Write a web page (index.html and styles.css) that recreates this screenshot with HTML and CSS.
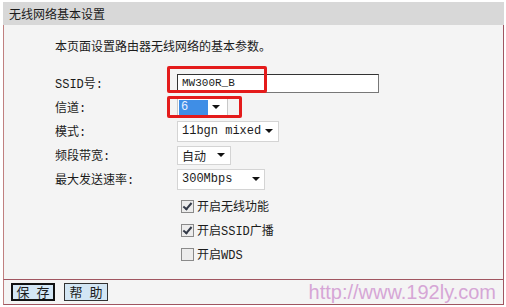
FILE: index.html
```html
<!DOCTYPE html>
<html>
<head>
<meta charset="utf-8">
<link rel="stylesheet" href="styles.css">
</head>
<body>
<div class="panel">
  <div class="head">无线网络基本设置</div>
  <div class="body">
    <p class="desc">本页面设置路由器无线网络的基本参数。</p>
    <div class="form">
      <div class="row"><span class="label">SSID号:</span><span class="input">MW300R_B</span></div>
      <div class="row"><span class="label">信道:</span><span class="select sel-ch"><span class="hl">6</span><span class="arrow"></span></span></div>
      <div class="row"><span class="label">模式:</span><span class="select sel-mode"><span class="val">11bgn mixed</span><span class="arrow"></span></span></div>
      <div class="row"><span class="label">频段带宽:</span><span class="select sel-bw"><span class="val">自动</span><span class="arrow"></span></span></div>
      <div class="row"><span class="label">最大发送速率:</span><span class="select sel-rate"><span class="val">300Mbps</span><span class="arrow"></span></span></div>
      <div class="checks">
        <div class="crow"><span class="cb on"></span><span>开启无线功能</span></div>
        <div class="crow"><span class="cb on"></span><span>开启SSID广播</span></div>
        <div class="crow"><span class="cb"></span><span>开启WDS</span></div>
      </div>
    </div>
    <div class="mark mark-ssid"></div>
    <div class="mark mark-ch"></div>
  </div>
  <div class="foot">
    <span class="btn btn-save">保 存</span>
    <span class="btn">帮 助</span>
    <span class="wm">http://www.192ly.com</span>
  </div>
</div>
</body>
</html>
```
FILE: styles.css
```css
html, body {
  margin: 0;
  padding: 0;
  background: #ffffff;
}
body {
  font-family: "Liberation Mono", "Noto Sans CJK SC", monospace;
  font-size: 12px;
  color: #1b1b1b;
}
.panel {
  margin: 2px 0 0 3px;
  width: 501px;
}
.head {
  height: 23px;
  line-height: 23px;
  background: #d8d8d8;
  padding-left: 6px;
  font-family: "Noto Sans CJK SC", sans-serif;
  font-size: 12px;
}
.body {
  position: relative;
  height: 254px;
  background: #f4f4f4;
  border-left: 1px solid #c08080;
  border-right: 1px solid #a05560;
  border-bottom: 1px solid #a05560;
  padding-left: 51px;
}
.desc {
  margin: 0;
  padding-top: 13px;
  line-height: 16px;
  font-family: "Noto Sans CJK SC", sans-serif;
}
.form {
  margin-top: 17px;
}
.row {
  display: flex;
  align-items: center;
  height: 24px;
}
.label {
  width: 122px;
  flex: none;
}
.input {
  width: 196px;
  height: 17px;
  line-height: 17px;
  background: #fff;
  border: 1px solid #333;
  border-right-color: #777;
  border-bottom-color: #777;
  padding-left: 4px;
  font-size: 11px;
}
.select {
  display: flex;
  align-items: center;
  height: 19px;
  background: #fff;
  border: 1px solid #d4d4d4;
  box-sizing: border-box;
  position: relative;
}
.select .val {
  padding-left: 4px;
  flex: 1;
}
.arrow {
  width: 0;
  height: 0;
  border-left: 4px solid transparent;
  border-right: 4px solid transparent;
  border-top: 4px solid #111;
  margin-right: 5px;
}
.sel-ch {
  width: 51px;
  border-color: #c8c8c8;
}
.sel-ch .hl {
  margin-left: 1px;
  width: 29px;
  height: 15px;
  line-height: 15px;
  background: #3f8ee6;
  color: #e8f0ff;
  padding-left: 2px;
  box-sizing: border-box;
  margin-right: auto;
}
.sel-ch .arrow {
  margin-right: 7px;
}
.sel-mode {
  width: 102px;
  height: 21px;
}
.sel-bw {
  width: 54px;
  height: 19px;
}
.sel-bw .val {
  font-family: "Noto Sans CJK SC", sans-serif;
}
.sel-rate {
  width: 88px;
  height: 21px;
}
.sel-rate .arrow {
  margin-right: 4px;
}
.checks {
  margin-top: 3px;
  padding-left: 126px;
}
.crow {
  display: flex;
  align-items: center;
  height: 24px;
  gap: 3px;
}
.cb {
  width: 11px;
  height: 11px;
  border: 1px solid #8a8a8a;
  background: #ececec;
  position: relative;
  flex: none;
}
.cb.on::after {
  content: "";
  position: absolute;
  left: 3px;
  top: 0px;
  width: 3px;
  height: 7px;
  border-right: 2px solid #333a48;
  border-bottom: 2px solid #333a48;
  transform: rotate(40deg);
}
.mark {
  position: absolute;
  border: 3px solid #e41b1b;
  border-radius: 2px;
  box-sizing: border-box;
}
.mark-ssid {
  left: 163px;
  top: 41px;
  width: 100px;
  height: 27px;
}
.mark-ch {
  left: 163px;
  top: 71px;
  width: 75px;
  height: 22px;
}
.foot {
  display: flex;
  align-items: center;
  height: 24px;
  border-left: 1px solid #c08080;
  border-right: 1px solid #a05560;
  border-bottom: 1px solid #a05560;
  padding-left: 7px;
  padding-right: 7px;
  background: #f4f4f4;
}
.btn {
  display: inline-block;
  flex: none;
  width: 44px;
  height: 18px;
  line-height: 16px;
  box-sizing: border-box;
  text-align: center;
  white-space: nowrap;
  background: #d3e6f4;
  border: 1px solid #333;
  font-family: "Noto Sans CJK SC", sans-serif;
  font-size: 13px;
  letter-spacing: 2px;
  text-indent: 2px;
  margin-right: 9px;
}
.btn-save {
  border: 2px solid #111;
  line-height: 14px;
}
.wm {
  margin-left: auto;
  font-family: "Liberation Sans", Arial, sans-serif;
  font-size: 20px;
  color: #d6a6d6;
  line-height: 22px;
}
```
